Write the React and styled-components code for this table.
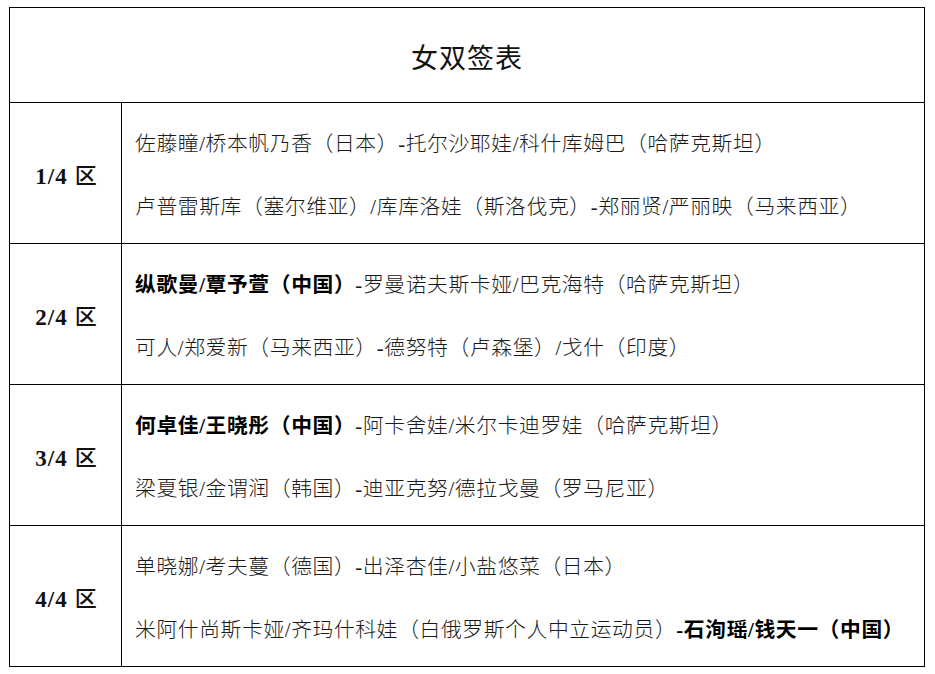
import React from "react";
import styled, { createGlobalStyle } from "styled-components";

const GlobalStyle = createGlobalStyle`
  html, body { margin: 0; padding: 0; background: #ffffff; }
  body { font-family: "Liberation Serif", "Noto Sans CJK SC", serif; color: #111; }
`;

const Page = styled.div`
  padding: 7px 0 0 9px;
`;

const Sheet = styled.div`
  width: 916px;
  box-sizing: border-box;
  display: grid;
  grid-template-columns: 112px 1fr;
  grid-template-rows: 95px repeat(4, 141px);
  border-top: 1px solid #000;
  border-left: 1px solid #000;
`;

const Cell = styled.div`
  box-sizing: border-box;
  border-right: 1px solid #000;
  border-bottom: 1px solid #000;
  display: flex;
  align-items: center;
`;

const TitleCell = styled(Cell)`
  grid-column: 1 / span 2;
  justify-content: center;
  font-family: "Noto Sans CJK SC", sans-serif;
  font-size: 27px;
  letter-spacing: 1px;
  font-weight: 400;
  padding-top: 2px;
`;

const ZoneCell = styled(Cell)`
  justify-content: center;
  padding-left: 2px;
  padding-top: 1px;
`;

const ZoneText = styled.span`
  font-family: "Liberation Serif", "Noto Sans CJK SC", serif;
  font-weight: 700;
  font-size: 23px;
  letter-spacing: 1px;
  white-space: nowrap;
`;

const ZoneChar = styled.span`
  margin-left: 7px;
  font-weight: 500;
  font-size: 22px;
  vertical-align: 1px;
`;

const EntryCell = styled(Cell)`
  flex-direction: column;
  align-items: flex-start;
  justify-content: center;
  padding-left: 13px;
  padding-top: 4px;
`;

const Line = styled.div`
  font-family: "Liberation Serif", "Noto Sans CJK SC", serif;
  font-size: 20.8px;
  letter-spacing: 0.6px;
  line-height: 63px;
  white-space: nowrap;
  font-weight: 300;
  color: #1a1a1a;
`;

const Strong = styled.span`
  font-weight: 700;
  color: #000;
`;

const rows = [
  {
    zone: "1/4",
    lines: [
      [["佐藤瞳/桥本帆乃香（日本）-托尔沙耶娃/科什库姆巴（哈萨克斯坦）", false]],
      [["卢普雷斯库（塞尔维亚）/库库洛娃（斯洛伐克）-郑丽贤/严丽映（马来西亚）", false]],
    ],
  },
  {
    zone: "2/4",
    lines: [
      [["纵歌曼/覃予萱（中国）", true], ["-罗曼诺夫斯卡娅/巴克海特（哈萨克斯坦）", false]],
      [["可人/郑爱新（马来西亚）-德努特（卢森堡）/戈什（印度）", false]],
    ],
  },
  {
    zone: "3/4",
    lines: [
      [["何卓佳/王晓彤（中国）", true], ["-阿卡舍娃/米尔卡迪罗娃（哈萨克斯坦）", false]],
      [["梁夏银/金谓润（韩国）-迪亚克努/德拉戈曼（罗马尼亚）", false]],
    ],
  },
  {
    zone: "4/4",
    lines: [
      [["单晓娜/考夫蔓（德国）-出泽杏佳/小盐悠菜（日本）", false]],
      [["米阿什尚斯卡娅/齐玛什科娃（白俄罗斯个人中立运动员）", false], ["-石洵瑶/钱天一（中国）", true]],
    ],
  },
];

export default function App() {
  return (
    <>
      <GlobalStyle />
      <Page>
        <Sheet>
          <TitleCell>女双签表</TitleCell>
          {rows.map((r) => (
            <React.Fragment key={r.zone}>
              <ZoneCell>
                <ZoneText>
                  {r.zone}
                  <ZoneChar>区</ZoneChar>
                </ZoneText>
              </ZoneCell>
              <EntryCell>
                {r.lines.map((parts, i) => (
                  <Line key={i}>
                    {parts.map(([t, b], j) =>
                      b ? <Strong key={j}>{t}</Strong> : <span key={j}>{t}</span>
                    )}
                  </Line>
                ))}
              </EntryCell>
            </React.Fragment>
          ))}
        </Sheet>
      </Page>
    </>
  );
}
